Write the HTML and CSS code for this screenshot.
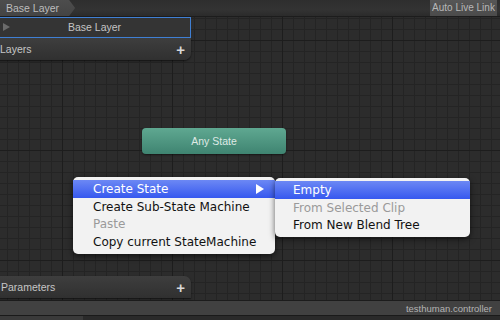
FILE: index.html
```html
<!DOCTYPE html>
<html lang="en">
<head>
  <meta charset="UTF-8">
  <title>Animator - Base Layer</title>
  <link rel="stylesheet" href="styles.css">
</head>
<body>
  <div class="editor">

    <!-- TOOLBAR -->
    <div class="toolbar">
      <div class="crumb">Base Layer</div>
      <div class="live-link">Auto Live Link</div>
    </div>

    <!-- CANVAS -->
    <div class="canvas">
      <div class="layers-panel">
        <div class="layer-row"><span class="tri"></span><span class="layer-name">Base Layer</span></div>
        <div class="panel-head layers-head"><span>Layers</span><span class="plus">+</span></div>
      </div>

      <div class="state any-state">Any State</div>

      <div class="menu main-menu">
        <div class="item active">Create State<span class="arrow"></span></div>
        <div class="item">Create Sub-State Machine</div>
        <div class="item disabled">Paste</div>
        <div class="item">Copy current StateMachine</div>
      </div>

      <div class="menu sub-menu">
        <div class="item active">Empty</div>
        <div class="item disabled">From Selected Clip</div>
        <div class="item">From New Blend Tree</div>
      </div>

      <div class="panel-head params-head"><span>Parameters</span><span class="plus">+</span></div>
    </div>

    <!-- STATUS -->
    <div class="statusbar">testhuman.controller</div>
    <div class="strip"><div class="strip-left"></div></div>
  </div>
</body>
</html>
```

FILE: styles.css
```css
/* BASE */
* { margin: 0; padding: 0; box-sizing: border-box; }
html, body { width: 500px; height: 320px; overflow: hidden; }
body { font-family: 'Liberation Sans', Arial, sans-serif; background: #1e1e1e; color: #c8c8c8; }

.editor {
  display: flex;
  flex-direction: column;
  height: 320px;
}

/* TOOLBAR */
.toolbar {
  height: 17px;
  display: flex;
  justify-content: space-between;
  background: linear-gradient(#2e2e2e, #333 60%, #2b2b2b);
  border-bottom: 1px solid #1c1c1c;
}
.crumb {
  height: 16px;
  padding: 0 16px 0 6px;
  font-size: 10.5px;
  line-height: 16px;
  color: #bdbdbd;
  background: linear-gradient(#4d4d4d, #444);
  clip-path: polygon(0 0, calc(100% - 6px) 0, 100% 50%, calc(100% - 6px) 100%, 0 100%);
}
.live-link {
  width: 67px;
  height: 16px;
  margin-right: 3px;
  font-size: 10px;
  line-height: 16px;
  text-align: center;
  color: #b8b8b8;
  background: linear-gradient(#565656, #4b4b4b);
}

/* CANVAS */
.canvas {
  position: relative;
  flex: 1;
  background-color: #2c2c2c;
  background-image:
    linear-gradient(90deg, #1d1d1d 1px, transparent 1px),
    linear-gradient(#1d1d1d 1px, transparent 1px),
    linear-gradient(90deg, #242424 1px, transparent 1px),
    linear-gradient(#242424 1px, transparent 1px);
  background-size: 110px 110px, 110px 110px, 11px 11px, 11px 11px;
  background-position: 62px 0, 0 23px, 7px 0, 0 1px;
}

/* LEFT PANELS */
.layers-panel {
  position: absolute;
  left: -2px;
  top: 0;
  width: 193px;
}
.layer-row {
  position: relative;
  height: 21px;
  border: 1px solid #3f7fd3;
  background: #343434;
  font-size: 10.5px;
  line-height: 19px;
  text-align: center;
  color: #c4c4c4;
}
.tri {
  position: absolute;
  left: 4px;
  top: 5px;
  border-left: 7px solid #6b6b6b;
  border-top: 4px solid transparent;
  border-bottom: 4px solid transparent;
}
.panel-head {
  display: flex;
  justify-content: space-between;
  align-items: center;
  height: 22px;
  padding: 0 6px 0 2px;
  font-size: 10.5px;
  color: #c6c6c6;
  background: linear-gradient(#3e3e3e, #303030);
  box-shadow: 0 1px 2px rgba(0, 0, 0, 0.6);
}
.layers-head {
  border-bottom-right-radius: 7px;
}
.params-head {
  position: absolute;
  left: -1px;
  bottom: 2px;
  width: 192px;
  height: 22px;
  border-top-right-radius: 7px;
}
.plus {
  font-size: 15px;
  font-weight: bold;
  color: #d8d8d8;
}

/* STATE NODE */
.state {
  position: absolute;
  display: flex;
  align-items: center;
  justify-content: center;
  border-radius: 4px;
  font-size: 10.5px;
}
.any-state {
  left: 142px;
  top: 111px;
  width: 144px;
  height: 26px;
  color: #dfe9e5;
  background: linear-gradient(#5fa891, #3f8471);
  box-shadow: 0 1px 2px rgba(0, 0, 0, 0.5);
}

/* CONTEXT MENUS */
.menu {
  position: absolute;
  padding: 3px 0 3px;
  background: #f2f2f2;
  border-radius: 5px;
  box-shadow: 0 2px 6px rgba(0, 0, 0, 0.6);
  font-family: 'DejaVu Sans', sans-serif;
  font-size: 12px;
  color: #111;
}
.main-menu {
  left: 73px;
  top: 160px;
  width: 202px;
}
.sub-menu {
  left: 275px;
  top: 161px;
  width: 195px;
}
.item {
  position: relative;
  height: 17.7px;
  line-height: 18px;
  padding-left: 20px;
  white-space: nowrap;
}
.sub-menu .item { padding-left: 18px; }
.item.active {
  color: #fff;
  background: linear-gradient(#6c88f4, #3658ef);
}
.item.disabled { color: #9a9a9a; }
.arrow {
  position: absolute;
  right: 11px;
  top: 4px;
  border-left: 8px solid #fff;
  border-top: 5px solid transparent;
  border-bottom: 5px solid transparent;
}

/* STATUS */
.statusbar {
  height: 15px;
  padding-right: 8px;
  text-align: right;
  font-size: 9.5px;
  line-height: 15px;
  color: #b4b4b4;
  background: #414141;
  border-top: 1px solid #1c1c1c;
}
.strip {
  height: 5px;
  background: #2a2a2a;
  border-top: 1px solid #1a1a1a;
}
.strip-left {
  width: 83px;
  height: 4px;
  background: #3a3a3a;
}
```
